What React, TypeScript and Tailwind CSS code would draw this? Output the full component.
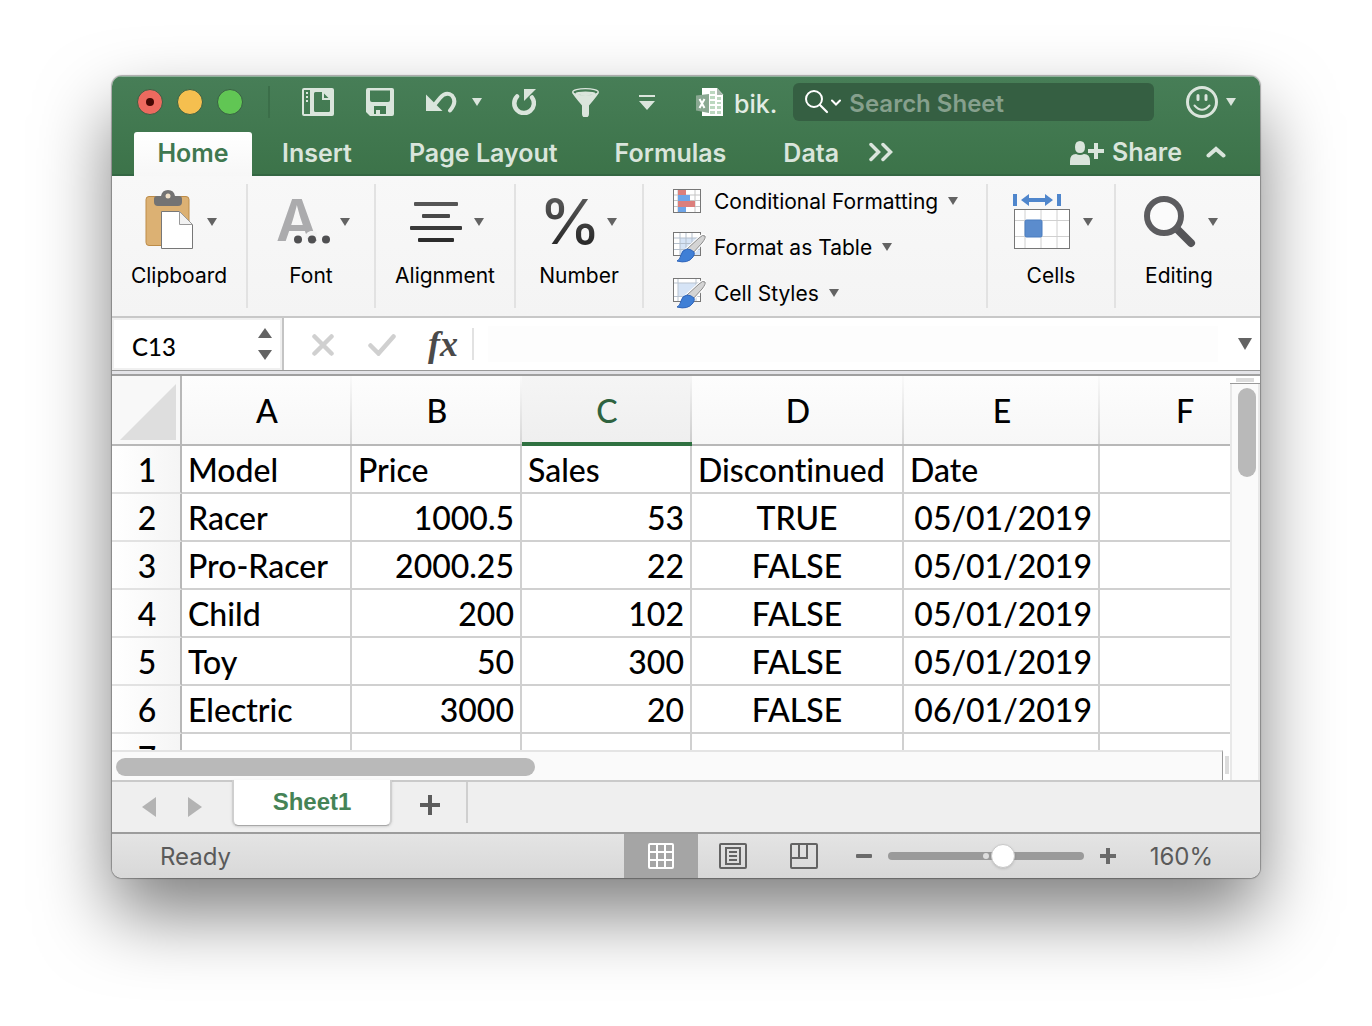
import React from "react";

const columns = ["A", "B", "C", "D", "E", "F"];

const rows = [
  ["Model", "Price", "Sales", "Discontinued", "Date", ""],
  ["Racer", "1000.5", "53", "TRUE", "05/01/2019", ""],
  ["Pro-Racer", "2000.25", "22", "FALSE", "05/01/2019", ""],
  ["Child", "200", "102", "FALSE", "05/01/2019", ""],
  ["Toy", "50", "300", "FALSE", "05/01/2019", ""],
  ["Electric", "3000", "20", "FALSE", "06/01/2019", ""],
];

const bodyAlign = ["text-left", "text-right", "text-right", "text-center", "text-right", "text-left"];

function Caret({ className = "h-2 w-2.5" }: { className?: string }) {
  return (
    <svg viewBox="0 0 10 8" className={`shrink-0 fill-current ${className}`} preserveAspectRatio="none" aria-hidden="true">
      <path d="M0 0h10L5 8z" />
    </svg>
  );
}

function TitleBar() {
  return (
    <div className="flex h-[52px] items-center pl-[25px] pr-6 text-[#dae5dc]">
      <div className="flex gap-3.5">
        <button aria-label="Close" className="flex size-[26px] items-center justify-center rounded-full border border-[#386044] bg-[#ed6a5f]">
          <span className="size-2 rounded-full bg-[#460804]" />
        </button>
        <button aria-label="Minimize" className="size-[26px] rounded-full border border-[#386044] bg-[#f5bf4f]" />
        <button aria-label="Zoom" className="size-[26px] rounded-full border border-[#386044] bg-[#61c654]" />
      </div>
      <div className="ml-[25px] h-8 w-0.5 bg-[#3b6e49]" />
      <button aria-label="New from template" className="ml-8 shrink-0">
        <svg width="32" height="28" viewBox="0 0 32 28" fill="currentColor">
          <path
            fillRule="evenodd"
            d="M2 0h28a2 2 0 0 1 2 2v24a2 2 0 0 1-2 2H2a2 2 0 0 1-2-2V2a2 2 0 0 1 2-2zM2 2v24h6V2zM13.500 4a1.500 1.500 0 0 0-1.500 1.500v17a1.500 1.500 0 0 0 1.500 1.500h13a1.500 1.500 0 0 0 1.500-1.500V12h-8V4zM22 5.500V10h4.500z"
          />
          <path d="M4 4h2v2H4zM4 8h2v2H4zM4 12h2v2H4z" />
        </svg>
      </button>
      <button aria-label="Save" className="ml-8 shrink-0">
        <svg width="28" height="28" viewBox="0 0 28 28" fill="currentColor">
          <path fillRule="evenodd" d="M2 0h24a2 2 0 0 1 2 2v24a2 2 0 0 1-2 2H4l-4-4V2a2 2 0 0 1 2-2zM4 2.500v9.500q0 2 2 2h16q2 0 2-2V2.500zM8 18v8h2v-4h4v4h6v-8z" />
        </svg>
      </button>
      <button aria-label="Undo" className="ml-8 shrink-0">
        <svg width="31" height="22" viewBox="0 0 31 22" fill="currentColor">
          <path d="M0 3.500V20h16.500z" />
          <path d="M9.500 12.500L14 7Q20 0 26 4.500Q31.500 11 24 19.500" fill="none" stroke="currentColor" strokeWidth="4" strokeLinecap="round" />
        </svg>
      </button>
      <button aria-label="Undo history" className="ml-[15px]">
        <Caret />
      </button>
      <button aria-label="Redo" className="ml-[30px] shrink-0">
        <svg width="24" height="26" viewBox="0 0 24 26" fill="currentColor">
          <path d="M5 7.500a9.800 9.800 0 1 0 15 1" fill="none" stroke="currentColor" strokeWidth="4.500" strokeLinecap="round" />
          <path d="M12 0h12L12 12z" />
        </svg>
      </button>
      <button aria-label="Filter" className="ml-9 shrink-0">
        <svg width="27" height="29" viewBox="0 0 27 29" fill="currentColor">
          <path d="M0 4.500Q1 7 10 17.500V26a3.500 3.500 0 0 0 7 0v-8.500Q26 7 27 4.500z" />
          <ellipse cx="13.500" cy="4.500" rx="12" ry="3" fill="#467c56" />
          <ellipse cx="13.500" cy="4" rx="12.800" ry="3.400" fill="none" stroke="currentColor" strokeWidth="1.200" />
          <ellipse cx="13.500" cy="5.200" rx="10" ry="1.700" />
        </svg>
      </button>
      <button aria-label="Customize toolbar" className="ml-10 shrink-0">
        <svg width="16" height="15" viewBox="0 0 16 15" fill="currentColor">
          <path d="M0 0h16v2H0zM0 6h16l-8 9z" />
        </svg>
      </button>
      <svg className="ml-[41px] shrink-0" width="28" height="28" viewBox="0 0 28 28" aria-hidden="true">
        <path d="M6 0h15l6 6.500V28H6z" fill="#fff" />
        <path d="M21 0v7h6z" fill="#a8b8ac" />
        <path d="M14 3h5v3h-5zM14 8h5v3h-5zM21 9h4v3h-4zM14 13h5v3h-5zM21 14h4v2h-4zM14 18h5v3h-5zM21 18h4v3h-4zM14 23h5v3h-5zM21 23h4v3h-4z" fill="#bcd8c0" />
        <path d="M0 7.500L13 6v19L0 22.500z" fill="#8aa892" />
        <path d="M3.500 11l5 9M8.500 11l-5 9" stroke="#fff" strokeWidth="2" />
      </svg>
      <span className="ml-2.5 pt-1 text-[25px] leading-8 font-medium text-[#e3ece5]">bik.</span>
      <div className="ml-4 flex h-[38px] min-w-0 flex-1 items-center rounded-md bg-[#355f42] pl-3">
        <svg className="shrink-0" width="36" height="24" viewBox="0 0 36 24" fill="none" stroke="#fff" strokeLinecap="round" aria-hidden="true">
          <circle cx="9" cy="9" r="8" strokeWidth="2" />
          <path d="M15 15l7 7" strokeWidth="2.200" />
          <path d="M27 10.500l4 4 4-4" strokeWidth="2" />
        </svg>
        <input
          aria-label="Search Sheet"
          placeholder="Search Sheet"
          className="ml-2 h-9 min-w-0 flex-1 bg-transparent pt-0.5 text-2xl font-semibold outline-none placeholder:text-[#86a08d]"
        />
      </div>
      <button aria-label="Feedback" className="ml-8 flex shrink-0 items-center gap-2">
        <svg width="32" height="32" viewBox="0 0 32 32" fill="none" stroke="currentColor" strokeLinecap="round">
          <circle cx="16" cy="16" r="14.500" strokeWidth="3" />
          <path d="M12 9.500v4M20 9.500v4" strokeWidth="3" />
          <path d="M8.500 19.500q7.500 8.500 15 0" strokeWidth="2" />
        </svg>
        <Caret />
      </button>
    </div>
  );
}

function RibbonTabs() {
  return (
    <nav className="flex h-11 items-stretch pl-[22px] pr-[34px] text-[25px] font-semibold whitespace-nowrap text-[#dae5dc] shadow-[inset_0_-2px_0_#346743]">
      <button className="w-[118px] rounded-t-[3px] bg-linear-to-b from-white to-[#f7f7f7] text-[#3f7850]">Home</button>
      <button className="ml-[30px]">Insert</button>
      <button className="ml-[57px]">Page Layout</button>
      <button className="ml-[57px]">Formulas</button>
      <button className="ml-[57px]">Data</button>
      <button aria-label="More tabs" className="ml-[30px] pb-1">
        <svg width="24" height="20" viewBox="0 0 24 20" fill="none" stroke="currentColor" strokeWidth="3.500" strokeLinecap="round">
          <path d="M2 2.500L9.500 10 2 17.500M14 2.500L21.500 10 14 17.500" />
        </svg>
      </button>
      <button className="ml-auto flex items-center gap-2 pb-0.5">
        <svg width="34" height="25" viewBox="0 0 34 25" fill="currentColor">
          <path d="M5 6Q5 0 10 0t5 6q0 6-5 6T5 6zM0 24v-4q0-7 6-7 4 2 8 0 6 0 6 7v4zM24 2h4v6h6v4h-6v6h-4v-6h-6V8h6z" />
        </svg>
        Share
      </button>
      <button aria-label="Collapse ribbon" className="ml-6 pb-1">
        <svg width="20" height="12" viewBox="0 0 20 12" fill="none" stroke="currentColor" strokeWidth="4" strokeLinecap="round">
          <path d="M2.500 9.500L10 3l7.500 6.500" />
        </svg>
      </button>
    </nav>
  );
}

function Group({ label, width, gap, children }: { label: string; width: string; gap: string; children: React.ReactNode }) {
  return (
    <button className={`flex shrink-0 flex-col items-center pt-1.5 ${width}`}>
      <span className={`flex h-[60px] items-center pl-1 text-[#636363] ${gap}`}>
        {children}
        <Caret className="mt-1 h-2 w-2.5" />
      </span>
      <span className="mt-3.5 text-[21px] leading-6">{label}</span>
    </button>
  );
}

function Brush() {
  return (
    <g>
      <path d="M33 5Q31 3 27 7L15 18l5 5L30 12q4-5 3-7z" fill="#c9c9c9" stroke="#fff" strokeWidth="3" />
      <path d="M33 5Q31 3 27 7L15 18l5 5L30 12q4-5 3-7z" fill="#d4d4d4" stroke="#8a8a8a" strokeWidth="1" />
      <path d="M15 18q-5 1-6 6-1 5-4 6 11 3 16-4 2-3 1-5-3-3-7-3z" fill="#3f7fd6" stroke="#2f65bb" strokeWidth="1" />
    </g>
  );
}

function StyleRow({ label, children }: { label: string; children: React.ReactNode }) {
  return (
    <button className="flex h-[46px] items-center">
      <svg width="34" height="32" viewBox="0 0 34 32" aria-hidden="true">
        {children}
      </svg>
      <span className="ml-2 pt-px text-[21px] leading-6 whitespace-nowrap">{label}</span>
      <Caret className="ml-2.5 h-2 w-2.5 text-[#636363]" />
    </button>
  );
}

function Ribbon() {
  return (
    <div className="flex border-b-2 border-[#c8c8c8] bg-linear-to-b from-[#f8f8f8] to-[#f4f4f4] pt-2 pr-[18px] pb-2 text-black">
      <div className="flex h-[124px] w-full divide-x-2 divide-[#e2e2e2]">
        <Group label="Clipboard" width="w-[136px]" gap="gap-3.5">
          <svg width="48" height="60" viewBox="0 0 48 60" aria-hidden="true">
            <rect x="1" y="6.500" width="43" height="49" rx="3" fill="#dcb173" stroke="#bd8c48" />
            <path d="M12 6h4q1-6 7-6t7 6h4q3 0 3 3v3q0 4-4 4H13q-4 0-4-4V9q0-3 3-3z" fill="#737373" />
            <circle cx="23" cy="6" r="2.500" fill="#f0e0c8" />
            <path d="M16.500 21.500h18L47.500 35v23.500h-31z" fill="#fff" stroke="#777" />
            <path d="M34.500 21.500v13h13z" fill="#f2f2f2" stroke="#999" />
          </svg>
        </Group>
        <Group label="Font" width="w-32" gap="gap-2.5">
          <span className="relative flex h-[60px] w-[54px] items-center text-[58px] leading-none font-semibold text-[#ababad]">
            A
            <svg className="absolute right-0 bottom-1.5" width="38" height="13" viewBox="0 0 38 13" aria-hidden="true">
              <path d="M13 7a7 7 0 0 1 12-5v6z" fill="#f2f2f2" />
              <g fill="#505052">
                <circle cx="6" cy="8.500" r="4" />
                <circle cx="20" cy="8.500" r="4" />
                <circle cx="34" cy="8.500" r="4" />
              </g>
            </svg>
          </span>
        </Group>
        <Group label="Alignment" width="w-[140px]" gap="gap-3">
          <svg width="52" height="60" viewBox="0 0 52 60" aria-hidden="true">
            <rect x="4" y="12" width="44" height="4" rx="1" fill="#555" />
            <rect x="12" y="24" width="28" height="4" rx="1" fill="#484848" />
            <rect x="0" y="36" width="52" height="4" rx="1" fill="#3a3a3a" />
            <rect x="8" y="48" width="36" height="4" rx="1" fill="#2c2c2c" />
          </svg>
        </Group>
        <Group label="Number" width="w-32" gap="gap-3">
          <span className="flex w-[50px] justify-center bg-linear-to-b from-[#636363] to-[#222] bg-clip-text pt-1 text-[62px] leading-[60px] font-medium text-transparent">
            %
          </span>
        </Group>
        <div className="flex flex-1 flex-col pl-7">
          <div className="-mt-1.5">
            <StyleRow label="Conditional Formatting">
              <rect x="1.500" y="4.500" width="27" height="23" fill="#fff" stroke="#777" />
              <path d="M6 5v22M23 5v22M2 10h26M2 15.500h26M2 21.500h26" stroke="#c5c5c5" fill="none" />
              <path d="M6 5h8v5H6zM6 16h17v6H6z" fill="#dc7f7c" />
              <path d="M6 10h12v6H6zM6 22h8v5H6z" fill="#6fa5e8" />
            </StyleRow>
            <StyleRow label="Format as Table">
              <rect x="1.500" y="1.500" width="27" height="23" fill="#fff" stroke="#777" />
              <path d="M8 7h20v17H8z" fill="#d6e4f6" />
              <path d="M8 2v22M14 2v22M20 2v22M2 7h26M2 12.500h26M2 18.500h26" stroke="#b4bfcc" fill="none" />
              <Brush />
            </StyleRow>
            <StyleRow label="Cell Styles">
              <rect x="1.500" y="1.500" width="27" height="23" fill="#fff" stroke="#777" />
              <path d="M6 6h18v13H6z" fill="#d6e4f6" />
              <path d="M6 2v22M24 2v22M2 6h26M2 19.500h26" stroke="#b9c3cf" fill="none" />
              <Brush />
            </StyleRow>
          </div>
        </div>
        <Group label="Cells" width="w-32" gap="gap-3">
          <svg width="58" height="60" viewBox="0 0 58 60" aria-hidden="true">
            <path d="M0 4h4v12H0zM44 4h4v12h-4zM8 10l8-6v4h16V4l8 6-8 6v-4H16v4z" fill="#4f86cc" />
            <rect x="1.500" y="19.500" width="55" height="39" fill="#fff" stroke="#777" />
            <path d="M12 20v38M28 20v38M44 20v38M2 30.500h54M2 46.500h54" stroke="#d0d0d0" />
            <rect x="12" y="30" width="17" height="17" rx="1.500" fill="#5b8ccd" stroke="#4a7cbf" />
          </svg>
        </Group>
        <Group label="Editing" width="w-[126px]" gap="gap-3">
          <svg width="52" height="60" viewBox="0 0 52 60" aria-hidden="true">
            <path d="M33 39l14 14" stroke="#555558" strokeWidth="8" strokeLinecap="round" />
            <circle cx="20" cy="26" r="17" fill="#fbfbfb" stroke="#5c5c5f" strokeWidth="6" />
          </svg>
        </Group>
      </div>
    </div>
  );
}

function FormulaBar() {
  return (
    <div className="flex h-[58px] flex-col">
      <div className="flex flex-1 items-stretch bg-white">
        <div className="flex w-[172px] shrink-0 items-center border-r-2 border-[#c4c4c4] pl-5 pr-2.5 shadow-[inset_0_0_0_2px_#f0f0f0]">
          <input aria-label="Name box" defaultValue="C13" className="mt-1.5 min-w-0 flex-1 bg-transparent font-[Lato,sans-serif] text-2xl font-medium text-black outline-none" />
          <span className="flex flex-col gap-3 text-[#636363]">
            <button aria-label="Previous cell">
              <Caret className="h-2.5 w-3.5 rotate-180" />
            </button>
            <button aria-label="Next cell">
              <Caret className="h-2.5 w-3.5" />
            </button>
          </span>
        </div>
        <button aria-label="Cancel" className="ml-7 pt-0.5 text-[#d0d0d0]">
          <svg width="22" height="22" viewBox="0 0 22 22" stroke="currentColor" strokeWidth="4.500" strokeLinecap="round">
            <path d="M2.500 2.500l17 17M19.500 2.500l-17 17" />
          </svg>
        </button>
        <button aria-label="Enter" className="ml-[34px] pt-0.5 text-[#d0d0d0]">
          <svg width="28" height="22" viewBox="0 0 28 22" fill="none" stroke="currentColor" strokeWidth="4.500" strokeLinecap="round">
            <path d="M2.500 11.500l8 8L25.500 2.500" />
          </svg>
        </button>
        <button aria-label="Insert function" className="ml-8 font-['Liberation_Serif',serif] text-4xl leading-none font-bold text-[#4a4a4a] italic">
          fx
        </button>
        <span className="ml-3.5 h-8 w-0.5 self-center bg-[#e2e2e2]" />
        <input aria-label="Formula" className="my-2 ml-3.5 min-w-0 flex-1 bg-[#fdfdfd] px-2 text-2xl text-black outline-none" />
        <button aria-label="Expand formula bar" className="mr-2 ml-5 text-[#636363]">
          <Caret className="h-3 w-3.5" />
        </button>
      </div>
      <div className="h-1.5 border-t border-b-2 border-t-[#9a9a9a] border-b-[#a0a0a0] bg-[#e4e4e8]" />
    </div>
  );
}

function Sheet() {
  return (
    <div className="flex bg-white">
      <div className="flex min-w-0 flex-1 flex-col">
        <div className="overflow-hidden">
          <table className="w-[calc(100%+40px)] table-fixed border-separate border-spacing-0 font-[Lato,sans-serif] text-[32px] leading-none whitespace-nowrap text-black [font-variant-ligatures:none]">
            <colgroup>
              <col className="w-[70px]" />
              <col className="w-[170px]" />
              <col className="w-[170px]" />
              <col className="w-[170px]" />
              <col className="w-[212px]" />
              <col className="w-[196px]" />
              <col />
            </colgroup>
            <thead>
              <tr className="h-[70px]">
                <th aria-label="Select all" className="border-r-2 border-b-2 border-[#b8b8b8] bg-[#f8f8f8] p-0 pt-1">
                  <svg className="ml-2 block" width="56" height="56" viewBox="0 0 56 56" aria-hidden="true">
                    <path d="M56 0v56H0z" fill="#dedede" />
                  </svg>
                </th>
                {columns.map((c) => (
                  <th
                    key={c}
                    scope="col"
                    className={
                      c === "C"
                        ? "border-b-4 border-[#2f7141] bg-[linear-gradient(to_bottom,#f6f6f6,#cccccc),linear-gradient(to_bottom,#f5f5f5,#efefef)] bg-[length:2px_100%,100%_100%] bg-[position:right,left] bg-no-repeat p-0 pt-1 font-medium text-[#2f6340]"
                        : "border-b-2 border-[#b8b8b8] bg-[linear-gradient(to_bottom,#fafafa,#d6d6d6),linear-gradient(to_bottom,#fdfdfd,#f7f7f7)] bg-[length:2px_100%,100%_100%] bg-[position:right,left] bg-no-repeat p-0 pt-0.5 font-medium"
                    }
                  >
                    {c}
                  </th>
                ))}
              </tr>
            </thead>
            <tbody>
              {rows.map((row, r) => (
                <tr key={r} className="h-12">
                  <th scope="row" className="border-r-2 border-b-2 border-r-[#b8b8b8] border-b-[#e2e2e2] bg-linear-to-r from-white to-[#f5f5f5] p-0 pt-0.5 pl-0.5 font-medium">
                    {r + 1}
                  </th>
                  {row.map((v, c) => (
                    <td key={c} className={`border-r-2 border-b-2 border-[#d0d0d0] px-1.5 pt-0.5 pb-0 font-medium ${r === 0 ? "text-left" : bodyAlign[c]}`}>
                      {v}
                    </td>
                  ))}
                </tr>
              ))}
              <tr>
                <th scope="row" className="border-r-2 border-[#b8b8b8] bg-linear-to-r from-white to-[#f5f5f5] p-0 pl-0.5 font-medium">
                  <div className="h-4 overflow-hidden pt-2">7</div>
                </th>
                {columns.map((c) => (
                  <td key={c} className="border-r-2 border-[#d0d0d0] p-0" />
                ))}
              </tr>
            </tbody>
          </table>
        </div>
        <div className="flex h-[30px]">
          <div className="flex-1 border-t-2 border-r border-t-[#e4e4e4] border-r-[#999] bg-[#fafafa] px-1 pt-1.5">
            <div className="h-[18px] w-[38%] rounded-full bg-[#b9b9b9]" />
          </div>
          <div className="flex w-[7px] items-center justify-center">
            <div className="h-[18px] w-1 bg-[#dcdcdc]" />
          </div>
        </div>
      </div>
      <div className="flex w-[30px] shrink-0 flex-col">
        <div className="flex h-2 items-center justify-center border-b border-[#999]">
          <div className="h-1 w-[18px] bg-[#dcdcdc]" />
        </div>
        <div className="flex-1 border-x-2 border-[#e8e8e8] bg-[#fafafa] pt-1 pl-1.5">
          <div className="h-[89px] w-[18px] rounded-full bg-[#b9b9b9]" />
        </div>
      </div>
    </div>
  );
}

function SheetTabs() {
  return (
    <div className="flex h-[54px] items-start border-b-2 border-[#9c9c9c] bg-[#efefef] text-[#b3b3b3] shadow-[inset_0_2px_0_#cacaca]">
      <button aria-label="Previous sheet" className="mt-4 ml-[30px]">
        <svg width="14" height="22" viewBox="0 0 14 22" fill="currentColor">
          <path d="M14 1v20L0 11z" />
        </svg>
      </button>
      <button aria-label="Next sheet" className="mt-4 ml-8">
        <svg width="14" height="22" viewBox="0 0 14 22" fill="currentColor">
          <path d="M0 1v20l14-10z" />
        </svg>
      </button>
      <button className="ml-[30px] h-[46px] w-40 rounded-b-md border-x-2 border-b border-x-[#cfcfcf] border-b-[#a8a8a8] bg-white pb-0.5 font-['Liberation_Sans',sans-serif] text-2xl leading-none font-bold text-[#458356] shadow-sm">
        Sheet1
      </button>
      <button aria-label="Add sheet" className="mt-3.5 ml-7 text-[#5c5c5c]">
        <svg width="20" height="22" viewBox="0 0 20 22" fill="currentColor">
          <path d="M8 1h4v8h8v4h-8v8H8v-8H0V9h8z" />
        </svg>
      </button>
      <div className="mt-0.5 ml-[26px] h-[41px] w-0.5 bg-[#cfcfcf]" />
    </div>
  );
}

function StatusBar() {
  return (
    <div className="flex h-11 items-stretch bg-linear-to-b from-[#e4e4e4] to-[#d8d8d8] pr-[47px] pl-12 text-2xl text-[#5a5a5a]">
      <span className="self-center pt-0.5">Ready</span>
      <button aria-label="Normal view" className="ml-auto flex w-[74px] items-center justify-center bg-[#a5a5a5]">
        <svg width="26" height="26" viewBox="0 0 26 26" fill="none" stroke="#fff" strokeWidth="2">
          <rect x="1" y="1" width="24" height="24" rx="1" />
          <path d="M9 1v24M17 1v24M1 9h24M1 17h24" />
        </svg>
      </button>
      <button aria-label="Page layout view" className="ml-[21px]">
        <svg width="28" height="26" viewBox="0 0 28 26" fill="none" stroke="#636363" strokeWidth="2">
          <rect x="1" y="1" width="26" height="24" rx="1" />
          <path d="M7 5h14v16H7zM10 9h8M10 13h8M10 17h8" />
        </svg>
      </button>
      <button aria-label="Page break preview" className="ml-[43px]">
        <svg width="28" height="26" viewBox="0 0 28 26" fill="none" stroke="#636363" strokeWidth="2">
          <rect x="1" y="1" width="26" height="24" rx="1" />
          <path d="M1 15h16V1M9 1v14" />
        </svg>
      </button>
      <button aria-label="Zoom out" className="ml-[38px]">
        <svg width="16" height="16" viewBox="0 0 16 16" fill="#6a6a6a">
          <rect y="6" width="16" height="4" rx="1" />
        </svg>
      </button>
      <div className="relative ml-4 flex w-[196px] items-center">
        <input
          type="range"
          aria-label="Zoom level"
          min={10}
          max={260}
          defaultValue={160}
          className="h-2 w-full appearance-none rounded-full bg-[#9a9a9a] outline-none [&::-webkit-slider-thumb]:size-6 [&::-webkit-slider-thumb]:appearance-none [&::-webkit-slider-thumb]:rounded-full [&::-webkit-slider-thumb]:border [&::-webkit-slider-thumb]:border-[#c8c8c8] [&::-webkit-slider-thumb]:bg-white [&::-webkit-slider-thumb]:shadow-sm"
        />
        <span className="pointer-events-none absolute left-[95px] size-1.5 rounded-full bg-[#dedede]" />
      </div>
      <button aria-label="Zoom in" className="ml-4">
        <svg width="16" height="16" viewBox="0 0 16 16" fill="#6a6a6a">
          <path d="M6 0h4v6h6v4h-6v6H6v-6H0V6h6z" />
        </svg>
      </button>
      <span className="ml-[34px] self-center pt-0.5">160%</span>
    </div>
  );
}

export default function App() {
  return (
    <main className="min-h-screen overflow-hidden bg-white px-28 pt-[76px] pb-36 font-[Inter,sans-serif]">
      <div className="rounded-[10px] shadow-[0_0_1px_1px_rgba(0,0,0,0.3),0_36px_72px_rgba(0,0,0,0.5)]">
        <div className="overflow-hidden rounded-[10px]">
          <header className="bg-linear-to-b from-[#477e57] to-[#3c7349] shadow-[inset_0_1px_0_#8fb09a]">
            <TitleBar />
            <div className="pt-1">
              <RibbonTabs />
            </div>
          </header>
          <Ribbon />
          <FormulaBar />
          <Sheet />
          <SheetTabs />
          <StatusBar />
        </div>
      </div>
    </main>
  );
}
